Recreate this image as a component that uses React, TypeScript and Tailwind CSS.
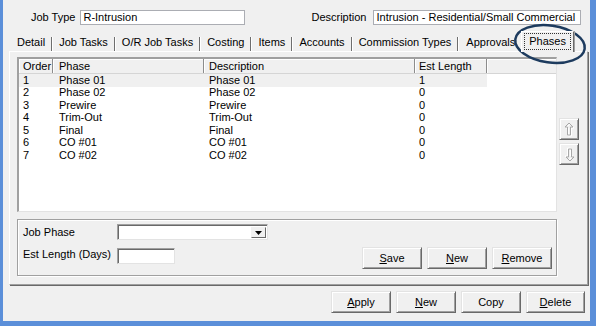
import React from "react";

const tabs = ["Detail", "Job Tasks", "O/R Job Tasks", "Costing", "Items", "Accounts", "Commission Types"];

const rows = [
  ["1", "Phase 01", "Phase 01", "1"],
  ["2", "Phase 02", "Phase 02", "0"],
  ["3", "Prewire", "Prewire", "0"],
  ["4", "Trim-Out", "Trim-Out", "0"],
  ["5", "Final", "Final", "0"],
  ["6", "CO #01", "CO #01", "0"],
  ["7", "CO #02", "CO #02", "0"],
];

function Btn({ children, className = "" }: { children: React.ReactNode; className?: string }) {
  return (
    <div
      className={
        "flex h-[22px] items-center justify-center border border-b-[#696969] border-l-[#e3e3e3] border-r-[#696969] border-t-[#e3e3e3] bg-[#f0f0f0] shadow-[inset_1px_1px_0_#ffffff,inset_-1px_-1px_0_#a0a0a0] " +
        className
      }
    >
      {children}
    </div>
  );
}

function Sep() {
  return (
    <div className="flex h-[14px] self-center pt-[3px]">
      <div className="h-[14px] w-px bg-[#6e6e6e]" />
      <div className="h-[14px] w-px bg-white" />
    </div>
  );
}

function Arrow({ down = false }: { down?: boolean }) {
  const pts = "5,1 9,5 6.5,5 6.5,13 3.5,13 3.5,5 1,5";
  return (
    <svg width="11" height="15" viewBox="0 0 11 15" className={down ? "rotate-180" : ""}>
      <polygon points={pts} transform="translate(1,1)" fill="none" stroke="#ffffff" strokeWidth="1" />
      <polygon points={pts} fill="none" stroke="#a8a8a8" strokeWidth="1" />
    </svg>
  );
}

export default function App() {
  return (
    <div className="relative flex h-[326px] w-[596px] flex-col overflow-hidden border-b-[5px] border-l-[3px] border-r-[6px] border-[#5b8fd9] bg-[#f0f0f0] font-['Liberation_Sans',Arial,sans-serif] text-[11px] leading-[13px] text-black">
      {/* header fields */}
      <div className="mt-[10px] flex h-[15px] items-center">
        <span className="ml-[28px]">Job Type</span>
        <div className="ml-[5px] h-[15px] w-[165px] border border-[#abadb3] bg-white pl-[2px]">R-Intrusion</div>
        <span className="ml-[66px]">Description</span>
        <div className="ml-[7px] h-[15px] w-[208px] overflow-hidden whitespace-nowrap border border-[#abadb3] bg-white pl-[2px]">
          Intrusion - Residential/Small Commercial
        </div>
      </div>

      {/* tabs */}
      <div className="ml-[8px] mt-[6px] flex h-[20px]">
        {tabs.map((t) => (
          <React.Fragment key={t}>
            <div className="flex items-center px-[6px] pt-[3px] whitespace-nowrap">{t}</div>
            <Sep />
          </React.Fragment>
        ))}
        <div className="flex items-center pl-[7px] pr-[5px] pt-[3px]">Approvals</div>
        <div className="relative z-10 ml-[1px] mb-[-1px] flex h-[21px] border-l border-r border-t border-l-white border-r-[#696969] border-t-white bg-[#f0f0f0] px-[2px] pt-[1px] shadow-[1px_0_0_#a0a0a0]">
          <div className="mb-[2px] flex items-center border border-dotted border-[#333] px-[4px]">Phases</div>
        </div>
      </div>

      {/* tab page */}
      <div className="ml-[6px] flex h-[234px] w-[579px] flex-col border-b border-l border-r border-t border-b-[#a0a0a0] border-l-white border-r-[#a0a0a0] border-t-white pl-[7px] pt-[5px] shadow-[1px_1px_0_#696969]">
        <div className="flex">
          <div className="flex h-[155px] w-[540px] flex-col border-b border-l-2 border-r border-t-2 border-b-[#e3e3e3] border-l-[#a0a0a0] border-r-[#e3e3e3] border-t-[#a0a0a0] bg-white">
            <div className="flex h-[15px] border-b border-[#d5d5d5] bg-[#f0f0f0]">
              <div className="flex w-[34px] items-center border-r border-[#8c8c8c] pl-[4px] shadow-[inset_1px_1px_0_#fff]">Order</div>
              <div className="flex w-[151px] items-center border-r border-[#8c8c8c] pl-[6px] shadow-[inset_1px_1px_0_#fff]">Phase</div>
              <div className="flex w-[211px] items-center border-r border-[#8c8c8c] pl-[5px] shadow-[inset_1px_1px_0_#fff]">Description</div>
              <div className="flex w-[72px] items-center border-r border-[#8c8c8c] pl-[4px] shadow-[inset_1px_1px_0_#fff]">Est Length</div>
              <div className="flex-1 shadow-[inset_1px_1px_0_#fff]" />
            </div>
            {rows.map((r, i) => (
              <div key={i} className={"flex h-[12.5px] w-[468px] items-center " + (i === 0 ? "bg-[#f0f0f0]" : "")}>
                <div className="w-[34px] pl-[4px]">{r[0]}</div>
                <div className="w-[151px] pl-[6px]">{r[1]}</div>
                <div className="w-[211px] pl-[5px]">{r[2]}</div>
                <div className="w-[72px] pl-[4px]">{r[3]}</div>
              </div>
            ))}
          </div>
          <div className="ml-[2px] flex flex-col gap-[3px] pt-[61px]">
            <Btn className="h-[19px] w-[20px]">
              <Arrow />
            </Btn>
            <Btn className="h-[19px] w-[20px]">
              <Arrow down />
            </Btn>
          </div>
        </div>

        {/* edit group */}
        <div className="mt-[7px] flex h-[57px] w-[540px] border border-[#a0a0a0] shadow-[inset_1px_1px_0_#fff,1px_1px_0_#fff]">
          <div className="flex flex-col pl-[5px] pt-[4px]">
            <div className="flex h-[16px] items-center">
              <span className="w-[94px]">Job Phase</span>
              <div className="flex h-[16px] w-[151px] border border-b-[#e3e3e3] border-l-[#a0a0a0] border-r-[#e3e3e3] border-t-[#a0a0a0] bg-white shadow-[inset_1px_1px_0_#696969]">
                <div className="flex-1" />
                <div className="mb-[1px] mr-[1px] mt-[2px] flex w-[15px] items-center justify-center border border-b-[#696969] border-l-[#f0f0f0] border-r-[#696969] border-t-[#f0f0f0] bg-[#f0f0f0]">
                  <svg width="7" height="4" viewBox="0 0 7 4">
                    <polygon points="0,0 7,0 3.5,4" fill="#000" />
                  </svg>
                </div>
              </div>
            </div>
            <div className="mt-[8px] flex items-start">
              <span className="w-[94px]">Est Length (Days)</span>
              <div className="h-[16px] w-[58px] border border-b-[#e3e3e3] border-l-[#a0a0a0] border-r-[#e3e3e3] border-t-[#a0a0a0] bg-white shadow-[inset_1px_1px_0_#696969]" />
            </div>
          </div>
          <div className="mb-[6px] ml-auto mr-[4px] flex gap-[5px] self-end">
            <Btn className="w-[60px]">
              <span className="underline">S</span>ave
            </Btn>
            <Btn className="w-[60px]">
              <span className="underline">N</span>ew
            </Btn>
            <Btn className="w-[60px]">
              <span className="underline">R</span>emove
            </Btn>
          </div>
        </div>
      </div>

      {/* bottom buttons */}
      <div className="mt-[6px] flex justify-end gap-[5px] pr-[5px]">
        <Btn className="w-[60px]">
          <span className="underline">A</span>pply
        </Btn>
        <Btn className="w-[60px]">
          <span className="underline">N</span>ew
        </Btn>
        <Btn className="w-[60px]">Copy</Btn>
        <Btn className="w-[59px]">
          <span className="underline">D</span>elete
        </Btn>
      </div>

      {/* annotation ellipse */}
      <svg className="pointer-events-none absolute left-[504px] top-[19px]" width="86" height="50" viewBox="0 0 86 50">
        <ellipse cx="43" cy="25" rx="35" ry="18.5" transform="rotate(8 43 25)" fill="none" stroke="#1d3b5e" strokeWidth="2.5" />
      </svg>
    </div>
  );
}
